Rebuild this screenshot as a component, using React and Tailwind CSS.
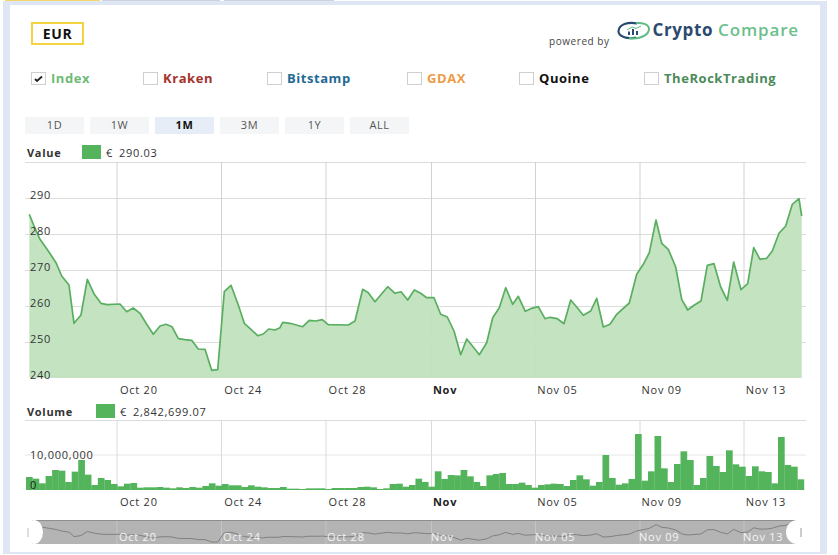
const A = [[88,160],[100,190],[120,235],[145,270],[168,305],[185,345],[207,372],[222,487],[243,462],[262,355],[283,400],[303,427],[322,431],[360,429],[380,452],[400,441],[420,457],[440,490],[460,520],[480,495],[498,490],[516,497],[535,533],[555,536],[575,538],[595,564],[615,565],[635,628],[653,626],[673,392],[693,373],[715,432],[733,487],[753,505],[773,524],[790,519],[806,504],[825,507]];
const B = [[30,500],[38,484],[60,487],[98,497],[118,478],[137,480],[157,476],[175,491],[235,492],[255,480],[278,385],[295,395],[315,422],[335,398],[353,377],[375,397],[393,392],[413,417],[433,387],[452,397],[470,410],[492,410],[512,460],[532,468],[552,510],[572,581],[590,534],[610,558],[628,581],[650,545],[668,470],[688,440],[707,380],[728,430],[745,406],[766,451],[785,442],[805,437],[825,473]];
const C = [[0,469],[22,473],[42,488],[62,417],[82,440],[100,463],[122,450],[140,412],[160,498],[180,490],[200,460],[220,442],[238,426],[260,340],[280,310],[298,275],[318,177],[335,247],[355,265],[377,318],[395,415],[413,447],[432,433],[453,420],[472,313],[492,308],[512,378],[532,418],[551,303],[573,386],[593,368],[611,260],[630,295],[650,292],[667,270],[687,217],[707,195],[727,130],[747,113],[755,165]];
const pts = [
  ...A.map(([x, y]) => [x / 3, 160 + y / 3]),
  ...B.map(([x, y]) => [270 + x / 3, 160 + y / 3]),
  ...C.map(([x, y]) => [550 + x / 3, 160 + y / 3]),
];
const line = pts.map((p) => p[0].toFixed(1) + "," + p[1].toFixed(1)).join(" ");
const area = `29.3,377 ${line} 801.7,377`;
const navLine = pts.map((p) => p[0].toFixed(1) + "," + (520 + ((p[1] - 197) * 20) / 172).toFixed(1)).join(" ");

const VA = [243,248,262,240,222,224,258,227,192,236,267,246,252,264,271,263,261,275,274,274,273,275,277,274,276,273,275,270,262,269,264,268,268,273,268,272,274,276,276];
const VB = [273,278,278,279,277,277,277,279,276,276,276,276,273,272,274,279,277,264,263,272,267,248,258,272,226,249,237,238,222,241,258,270,238,234,231,264,264,260,267,275,267,265];
const VC = [263,264,270,252,238,250,269,258,177,246,266,262,249,114,254,226,120,217,258,204,166,192,267,246,180,210,228,163,205,212,240,211,226,228,262,123,207,212,250];
const bars = [
  ...VA.map((t, i) => [26 + i * 6.53, t]),
  ...VB.map((t, i) => [280 + i * 6.45, t]),
  ...VC.map((t, i) => [550.5 + i * 6.5, t]),
];

const vx = [117, 221.5, 326, 431.5, 535.5, 640, 744];
const ticks = [["Oct 20"], ["Oct 24"], ["Oct 28"], ["Nov", true], ["Nov 05"], ["Nov 09"], ["Nov 13"]];
const exchanges = [
  ["Index", "text-[#6dbb75]", "w-[112px]", true],
  ["Kraken", "text-[#a5322c]", "w-[124px]"],
  ["Bitstamp", "text-[#1f6a94]", "w-[140px]"],
  ["GDAX", "text-[#ee9b45]", "w-[112px]"],
  ["Quoine", "text-[#111111]", "w-[125px]"],
  ["TheRockTrading", "text-[#4c8a5a]", "w-[160px]"],
];
const ranges = ["1D", "1W", "1M", "3M", "1Y", "ALL"];
const font = { fontFamily: '"Open Sans", sans-serif' };

function Ticks({ className }) {
  return (
    <div className={"flex pl-[95px] h-[12px] items-center text-[11px] leading-none tracking-[0.75px] " + className}>
      {ticks.map(([t, b]) => (
        <span key={t} className={"w-[104.3px] shrink-0 " + (b ? "font-bold text-[#222222]" : "")}>{t}</span>
      ))}
    </div>
  );
}

function Legend({ label, value, w }) {
  return (
    <div className="flex items-center h-[14px] text-[11px] leading-none text-[#333333] tracking-[0.7px] ml-[17px]">
      <span className={"font-bold " + w}>{label}</span>
      <span className="w-[19px] h-[14px] bg-[#53b45b]"></span>
      <span className="ml-[5px]">€</span>
      <span className="ml-[6px]">{value}</span>
    </div>
  );
}

export default function App() {
  return (
    <div className="w-[838px] h-[555px] bg-white overflow-hidden text-[#333333] font-['Open_Sans',sans-serif]" style={font}>
      <div className="flex h-[1px] pl-[5px] gap-[2px]">
        <div className="w-[95px] bg-[#f3d76a]"></div>
        <div className="w-[118px] bg-[#ccd3de]"></div>
        <div className="w-[110px] ml-[2px] bg-[#ccd3de]"></div>
      </div>
      <div className="ml-[3px] w-[824px] h-[553px] border-x-[7px] border-t-[4px] border-b-[2px] border-[#dfe6f3] bg-white">
        <div className="flex justify-between pt-[17px] pl-[21px] pr-[21px] h-[40px]">
          <div className="w-[53px] h-[23px] border-2 border-[#f5d33f] flex items-center justify-center text-[14px] font-bold text-[#111111] tracking-[0.6px]">EUR</div>
          <div className="flex items-start -mt-[3px]">
            <span className="text-[10px] text-[#444444] tracking-[0.55px] mt-[15px] mr-[7px]">powered by</span>
            <svg width="34" height="20" viewBox="0 0 34 20" className="mr-[2px] mt-[2px]">
              <path d="M20 2.5C11 0.5 2 3.5 1.5 10C1.2 15.5 10 18.5 19 16.5" fill="none" stroke="#2b4a6f" strokeWidth="2.2" />
              <path d="M12 17C22 19 32 14 32 8C32 3.5 26 1.5 19 2" fill="none" stroke="#5dbb85" strokeWidth="2" />
              <path d="M11 14V10.5H13V14ZM15 14V8H17V14ZM19 14V10H21V14Z" fill="#2b4a6f" />
              <path d="M10 9L15 6L19 7.5L24 5" fill="none" stroke="#5dbb85" strokeWidth="1" />
            </svg>
            <span className="text-[17px] leading-[22px] font-bold text-[#2b4a6f] tracking-[0.6px]">Crypto</span>
            <span className="text-[17px] leading-[22px] font-semibold text-[#6cc08b] tracking-[0.85px] ml-[5px]">Compare</span>
          </div>
        </div>
        <div className="flex mt-[27px] pl-[21px] h-[12px] items-center">
          {exchanges.map(([name, color, w, on]) => (
            <div key={name} className={"flex items-center shrink-0 " + w}>
              <span className="w-[15px] h-[13px] border border-[#cfcfcf] bg-white flex items-center justify-center">
                {on && (
                  <svg width="9" height="7" viewBox="0 0 9 7">
                    <path d="M1 4L3 6L8 1.5" fill="none" stroke="#222222" strokeWidth="1.8" />
                  </svg>
                )}
              </span>
              <span className={"ml-[5px] text-[13px] font-bold tracking-[0.55px] leading-none " + color}>{name}</span>
            </div>
          ))}
        </div>
        <div className="flex gap-[6px] mt-[33px] pl-[15px]">
          {ranges.map((r) => (
            <div
              key={r}
              className={
                "w-[59px] h-[17px] flex items-center justify-center text-[11px] tracking-[0.6px] " +
                (r === "1M" ? "bg-[#e6edf7] font-bold text-[#111111]" : "bg-[#f4f5f7] text-[#555555]")
              }
            >
              {r}
            </div>
          ))}
        </div>
        <div className="mt-[11px]">
          <Legend label="Value" value="290.03" w="w-[55px]" />
        </div>
        <div className="relative mt-[2px] ml-[15px] w-[783px] h-[218px]">
          <svg width="783" height="218" viewBox="25 160 783 218" className="block">
            {[161, 197, 233, 269, 305, 341].map((y) => (
              <line key={y} x1="25" x2="806" y1={y + 0.5} y2={y + 0.5} stroke="#dcdcdc" />
            ))}
            {vx.map((x) => (
              <line key={x} x1={x} x2={x} y1="161" y2="377" stroke="#d2d2d2" />
            ))}
            <polygon points={area} fill="#bfe1bd" fillOpacity="0.94" />
            <polyline points={line} fill="none" stroke="#5aae60" strokeWidth="1.7" strokeLinejoin="round" />
          </svg>
          <div className="absolute left-[5px] top-[15px] flex flex-col text-[11px] leading-none tracking-[0.7px] text-[#333333]">
            {["290", "280", "270", "260", "250", "240"].map((v) => (
              <span key={v} className="h-[36px] flex items-center">{v}</span>
            ))}
          </div>
        </div>
        <div className="mt-[4px] ml-[15px]">
          <Ticks className="text-[#333333]" />
        </div>
        <div className="mt-[9px]">
          <Legend label="Volume" value="2,842,699.07" w="w-[69px]" />
        </div>
        <div className="relative mt-[2px] ml-[15px] w-[783px] h-[71px]">
          <svg width="783" height="71" viewBox="25 419 783 71" className="block">
            <line x1="25" x2="806" y1="419.5" y2="419.5" stroke="#dcdcdc" />
            <line x1="25" x2="806" y1="454" y2="454" stroke="#e6e6e6" />
            {vx.map((x) => (
              <line key={x} x1={x} x2={x} y1="419" y2="489" stroke="#dadada" />
            ))}
            {bars.map(([x, t], i) => (
              <rect key={i} x={x} y={395 + t / 3} width="6.7" height={489 - (395 + t / 3)} fill="#53b45b" />
            ))}
          </svg>
          <span className="absolute left-[5px] top-[29px] text-[11px] leading-none tracking-[0.75px] text-[#333333]">10,000,000</span>
          <span className="absolute left-[5px] top-[59px] text-[11px] leading-none text-[#222222]">0</span>
        </div>
        <div className="mt-[4px] ml-[15px]">
          <Ticks className="text-[#333333]" />
        </div>
        <div className="relative mt-[13px] ml-[16px] w-[777px] h-[24px]">
          <svg width="777" height="24" viewBox="26 518 777 24" className="block">
            <rect x="26" y="518" width="777" height="24" fill="#b4b4b4" />
            <line x1="26" x2="803" y1="518.5" y2="518.5" stroke="#8f8f8f" />
            {vx.map((x) => (
              <line key={x} x1={x} x2={x} y1="519" y2="542" stroke="#c4c4c4" />
            ))}
            <polyline points={navLine} fill="none" stroke="#7b7b7b" strokeWidth="0.9" />
            <ellipse cx="34" cy="530" rx="9" ry="12" fill="#ffffff" />
            <rect x="26" y="518" width="6" height="24" fill="#ffffff" />
            <line x1="28" x2="28" y1="526" y2="535" stroke="#bdbdbd" />
            <ellipse cx="797" cy="530" rx="11" ry="12" fill="#ffffff" />
            <rect x="797" y="518" width="6" height="24" fill="#ffffff" />
            <line x1="801" x2="801" y1="526" y2="535" stroke="#9a9a9a" />
          </svg>
          <div className="absolute left-[93px] top-[11px] flex text-[11px] leading-none tracking-[0.75px] text-white/85">
            {ticks.map(([t]) => (
              <span key={t} className="w-[104px] shrink-0">{t}</span>
            ))}
          </div>
        </div>
      </div>
    </div>
  );
}
